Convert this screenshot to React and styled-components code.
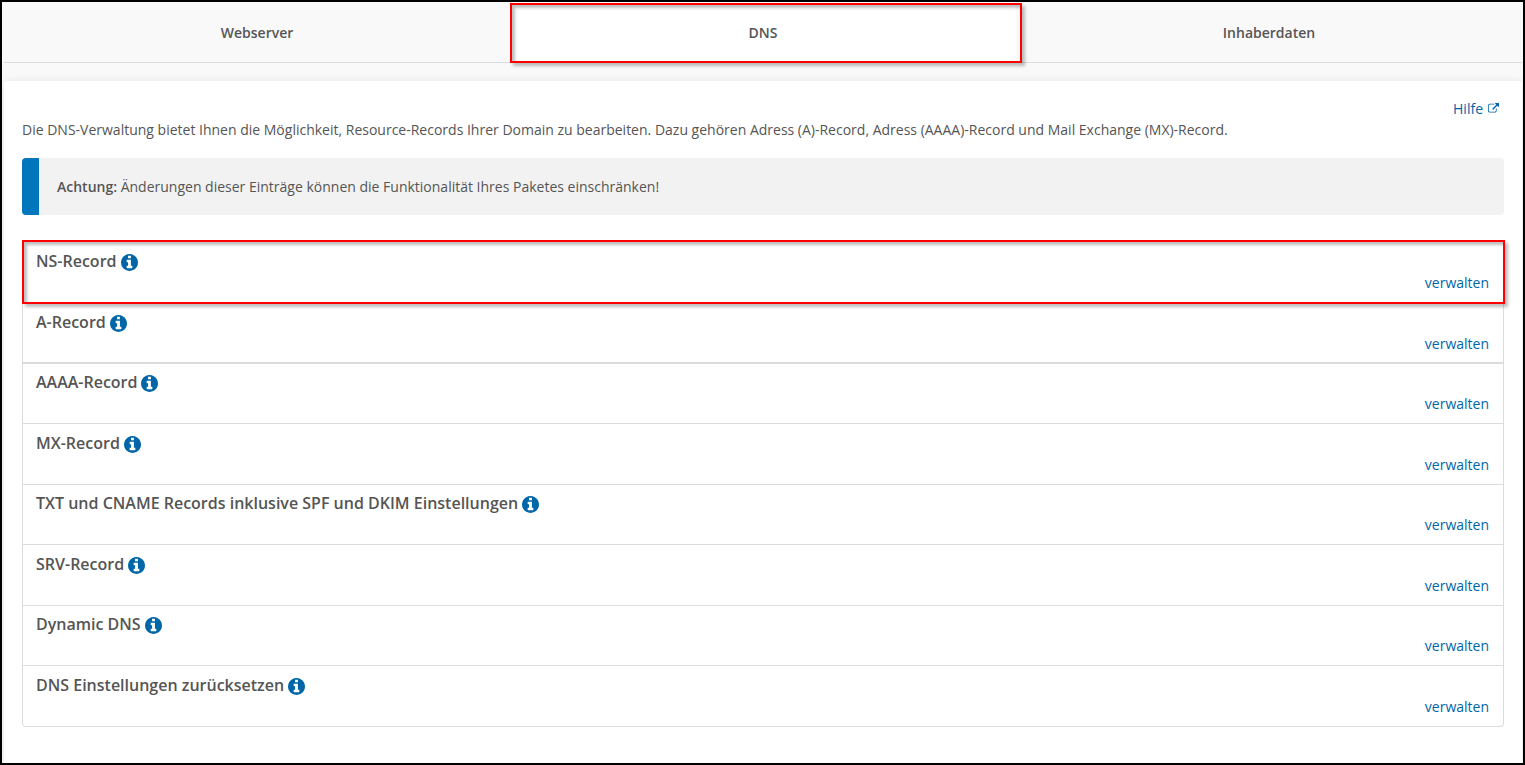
import styled, { createGlobalStyle, css } from "styled-components";
import React from "react";

const tabs = [
  { label: "Webserver" },
  { label: "DNS", active: true },
  { label: "Inhaberdaten" },
];

const records = [
  { title: "NS-Record", marked: true },
  { title: "A-Record", thick: true },
  { title: "AAAA-Record" },
  { title: "MX-Record" },
  { title: "TXT und CNAME Records inklusive SPF und DKIM Einstellungen" },
  { title: "SRV-Record" },
  { title: "Dynamic DNS" },
  { title: "DNS Einstellungen zurücksetzen" },
];

function InfoIcon() {
  return (
    <svg width="17" height="17" viewBox="128 128 1536 1536" aria-hidden="true">
      <path
        fill="currentColor"
        d="M1152 1376v-160q0-14-9-23t-23-9h-96v-512q0-14-9-23t-23-9h-320q-14 0-23 9t-9 23v160q0 14 9 23t23 9h96v320h-96q-14 0-23 9t-9 23v160q0 14 9 23t23 9h448q14 0 23-9t9-23zm-128-896v-160q0-14-9-23t-23-9h-192q-14 0-23 9t-9 23v160q0 14 9 23t23 9h192q14 0 23-9t9-23zm640 416q0 209-103 385.5t-279.5 279.5-385.5 103-385.5-103-279.5-279.5-103-385.5 103-385.5 279.5-279.5 385.5-103 385.5 103 279.5 279.5 103 385.5z"
      />
    </svg>
  );
}

function ExternalIcon() {
  return (
    <svg width="11" height="11" viewBox="0 0 1792 1792" aria-hidden="true">
      <path
        fill="currentColor"
        d="M1408 928v320q0 119-84.5 203.5t-203.5 84.5h-832q-119 0-203.5-84.5t-84.5-203.5v-832q0-119 84.5-203.5t203.5-84.5h704q14 0 23 9t9 23v64q0 14-9 23t-23 9h-704q-66 0-113 47t-47 113v832q0 66 47 113t113 47h832q66 0 113-47t47-113v-320q0-14 9-23t23-9h64q14 0 23 9t9 23zm384-864v512q0 26-19 45t-45 19-45-19l-176-176-652 652q-10 10-23 10t-23-10l-114-114q-10-10-10-23t10-23l652-652-176-176q-19-19-19-45t19-45 45-19h512q26 0 45 19t19 45z"
      />
    </svg>
  );
}

function App() {
  return (
    <>
      <GlobalStyle />
      <Page>
        <TabBar>
          {tabs.map((tab) => (
            <Tab key={tab.label} href="#" $active={tab.active}>
              {tab.label}
              {tab.active && <TabMarker />}
            </Tab>
          ))}
        </TabBar>
        <Card>
          <HelpRow>
            <HelpLink href="#">
              Hilfe <ExternalIcon />
            </HelpLink>
          </HelpRow>
          <Intro>
            Die DNS-Verwaltung bietet Ihnen die Möglichkeit, Resource-Records
            Ihrer Domain zu bearbeiten. Dazu gehören Adress (A)-Record, Adress
            (AAAA)-Record und Mail Exchange (MX)-Record.
          </Intro>
          <Notice>
            <strong>Achtung:</strong> Änderungen dieser Einträge können die
            Funktionalität Ihres Paketes einschränken!
          </Notice>
          <RecordList>
            {records.map((record) => (
              <Record key={record.title} $thick={record.thick}>
                <Title>
                  {record.title}
                  <InfoButton type="button" aria-label={`Info ${record.title}`}>
                    <InfoIcon />
                  </InfoButton>
                </Title>
                <ManageLink href="#">verwalten</ManageLink>
                {record.marked && <RowMarker />}
              </Record>
            ))}
          </RecordList>
        </Card>
      </Page>
    </>
  );
}

const GlobalStyle = createGlobalStyle`
  * {
    box-sizing: border-box;
  }
  body {
    margin: 0;
    font-family: "Open Sans", sans-serif;
    font-size: 14px;
    line-height: 21px;
    color: #555;
  }
  a {
    color: #0066a8;
    text-decoration: none;
  }
`;
const Page = styled.div`
  display: flex;
  flex-direction: column;
  min-height: 100vh;
  padding: 0 1px 0 2px;
  border: 2px solid #000;
  background: #f9f9f9;
  overflow: hidden;
`;
const TabBar = styled.nav`
  display: grid;
  grid-template-columns: repeat(3, 1fr);
  border-bottom: 1px solid #dcdcdc;
`;
const Tab = styled.a`
  position: relative;
  display: flex;
  align-items: center;
  justify-content: center;
  height: 60px;
  background: ${(props) => (props.$active ? "#fff" : "transparent")};
  color: #555;
  font-weight: 600;
`;
const marker = css`
  position: absolute;
  border: 2px solid #f00;
  box-shadow: 3px 3px 3px rgba(0, 0, 0, 0.25),
    inset 3px 3px 3px rgba(0, 0, 0, 0.25);
  pointer-events: none;
  z-index: 1;
`;
const TabMarker = styled.span`
  ${marker}
  inset: 1px -6px -1px 0;
`;
const Card = styled.main`
  flex: 1;
  margin-top: 18px;
  padding: 17px 18px 36px;
  border-radius: 3px 3px 0 0;
  background: #fff;
  box-shadow: 0 0 8px rgba(0, 0, 0, 0.08);
`;
const HelpRow = styled.div`
  display: flex;
  justify-content: flex-end;
  padding-right: 5px;
`;
const HelpLink = styled.a`
  display: flex;
  align-items: center;
  gap: 5px;
`;
const Intro = styled.p`
  margin: 0;
`;
const Notice = styled.div`
  margin: 18px 0 27px;
  padding: 18px;
  border-left: 17px solid #0077bd;
  border-radius: 4px;
  background: #f2f2f2;

  strong {
    font-weight: 600;
  }
`;
const RecordList = styled.ul`
  margin: 0;
  padding: 0;
  list-style: none;
  border: 1px solid #dcdcdc;
  border-top: 0;
  border-radius: 0 0 4px 4px;
`;
const Record = styled.li`
  position: relative;
  display: flex;
  flex-direction: column;
  height: 60px;
  padding: 7px 14px 0 13px;
  border-bottom: ${(props) => (props.$thick ? 2 : 1)}px solid #dcdcdc;

  &:first-child,
  &:nth-child(even) {
    height: 61px;
    padding-top: 8px;
  }
  &:last-child {
    height: 60px;
    border-bottom: 0;
  }
`;
const Title = styled.h2`
  display: flex;
  align-items: center;
  gap: 4px;
  margin: 0;
  font-size: 16px;
  font-weight: 600;
  line-height: 22px;
`;
const InfoButton = styled.button`
  display: flex;
  padding: 2px 0 0;
  border: 0;
  background: none;
  color: #0066a8;
  cursor: pointer;
`;
const ManageLink = styled.a`
  align-self: flex-end;
`;
const RowMarker = styled.span`
  ${marker}
  inset: -2px -2px -2px -1px;
`;

export default App;
